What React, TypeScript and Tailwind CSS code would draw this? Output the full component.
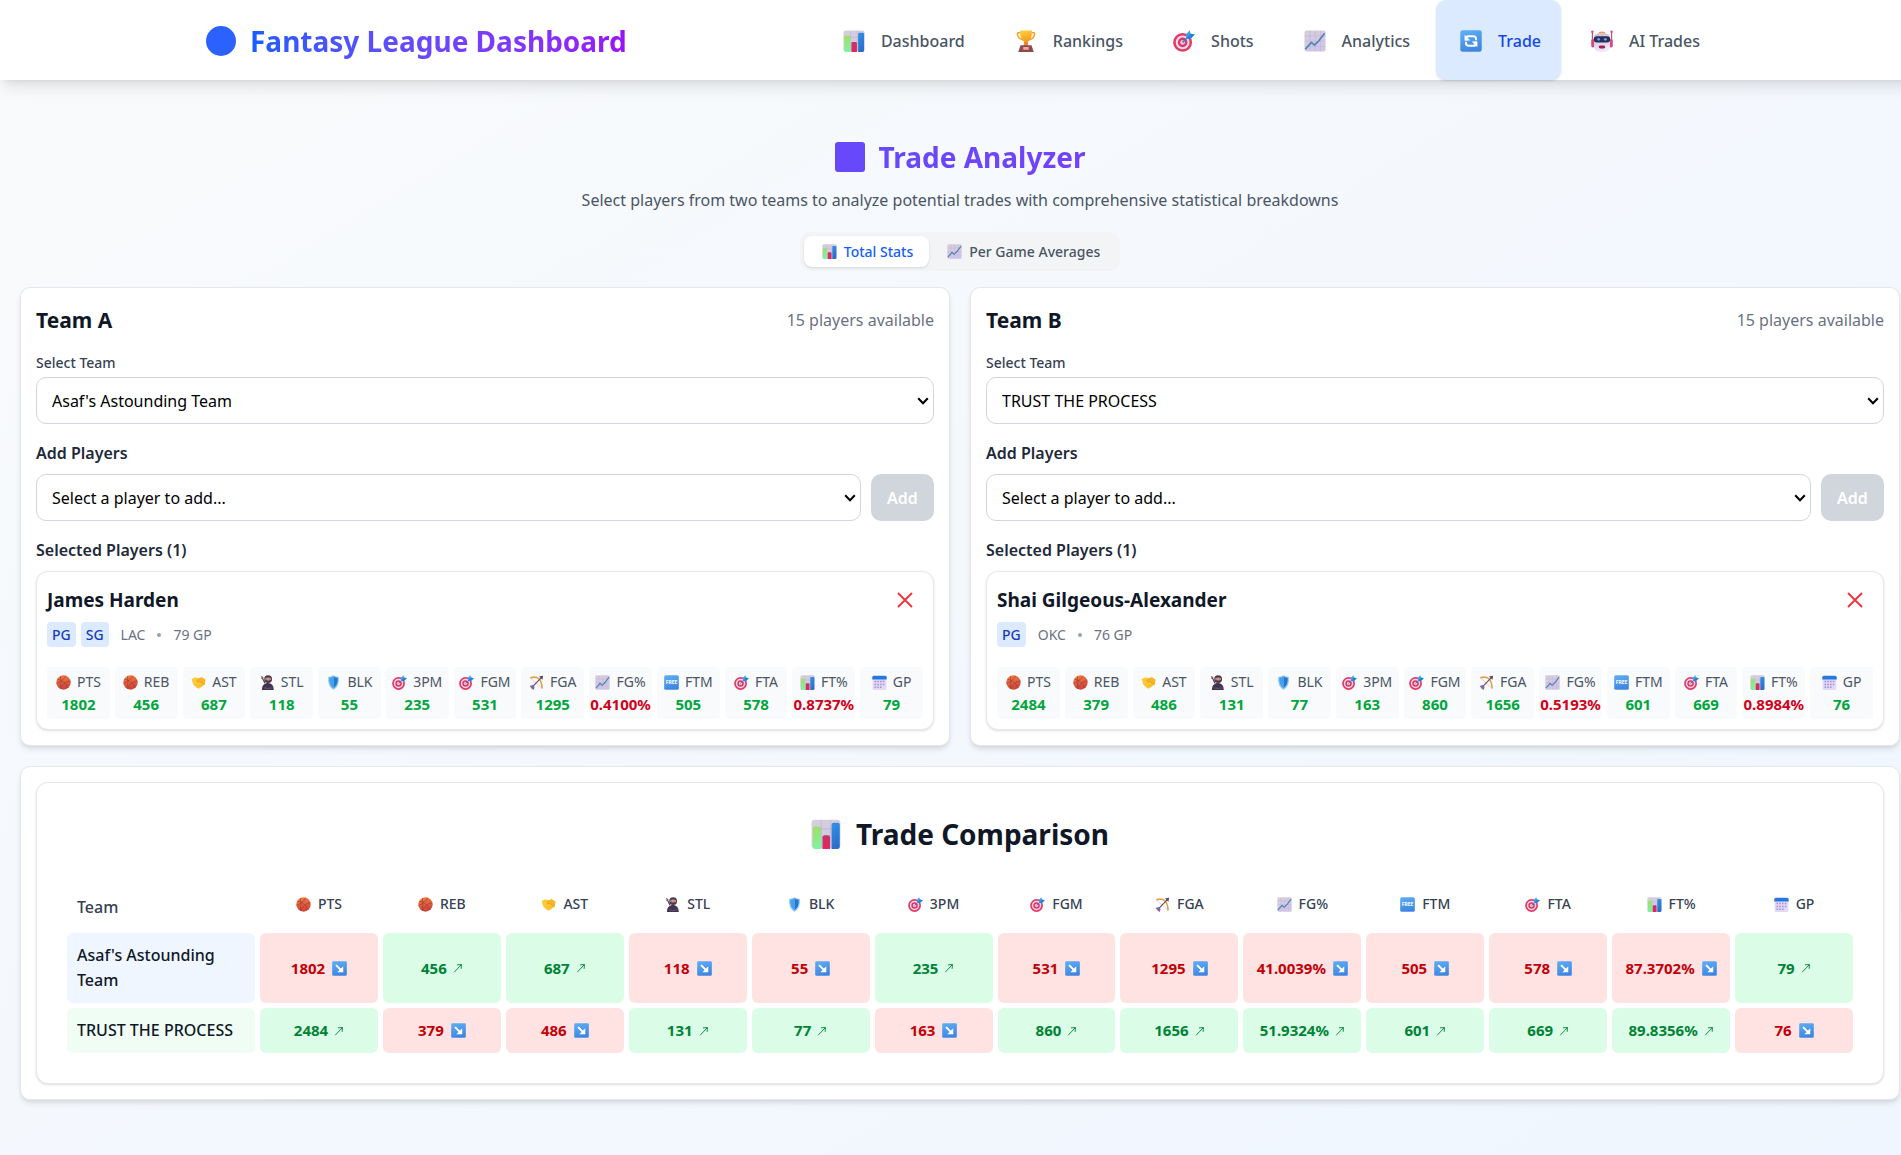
import React, { useState } from "react";

type IconName =
  | "bars" | "trophy" | "target" | "line" | "refresh" | "robot" | "ball"
  | "hands" | "ninja" | "shield" | "bow" | "free" | "calendar" | "down" | "up";

const shapes: Record<IconName, React.ReactNode> = {
  bars: (
    <>
      <rect x="0.5" y="0.5" width="23" height="23" rx="2.5" fill="url(#paper)" />
      <path d="M8.2 1v22M15.8 1v22M1 8h22" stroke="#b9afc4" strokeWidth="0.5" />
      <path d="M1.500 7.500Q1.500 6 3 6h3.500Q8 6 8 7.500V24H3q-1.500 0-1.500-2z" fill="url(#green)" />
      <path d="M9.200 14.500Q9.200 13 10.700 13h3Q15.200 13 15.200 14.500V24h-6z" fill="url(#pink)" />
      <path d="M16.500 4.500Q16.500 3 18 3h3.500Q23 3 23 4.500V22q0 2-2 2h-4.500z" fill="url(#blue)" />
    </>
  ),
  trophy: (
    <>
      <path d="M6 3H3.500q-1 0-.8 1.500Q3.500 10 8.500 10.500M18 3h2.500q1 0 .8 1.500Q20.500 10 15.500 10.500" fill="none" stroke="#f2a32b" strokeWidth="1.700" />
      <path d="M10.300 11h3.400l1 7H9.300z" fill="#e8862a" />
      <path d="M5.500 0.500h13Q19 12.500 12 13.500 5 12.500 5.500 0.500z" fill="url(#gold)" />
      <path d="M6 16.500h12l2.500 7.500h-17z" fill="#8d4b50" />
      <rect x="9" y="18.500" width="6" height="3" rx="0.600" fill="#f3a9a0" />
    </>
  ),
  target: (
    <>
      <circle cx="10.500" cy="13.500" r="10.300" fill="#e23c69" />
      <circle cx="10.500" cy="13.500" r="7.500" fill="#f6dbe8" />
      <circle cx="10.500" cy="13.500" r="5.200" fill="#d93669" />
      <circle cx="10.500" cy="13.500" r="2.700" fill="#f3c3d6" />
      <path d="M10.500 13.500L18 6" stroke="#4b79c9" strokeWidth="1.600" />
      <path d="M14.500 9.500l-.3-5L18.300.3l.7 3.500L23.700 5l-4.200 4.200z" fill="#38a3ea" />
      <path d="M14.500 9.500L19 4l4.700 1-4.200 4.200z" fill="#2781d6" />
    </>
  ),
  line: (
    <>
      <rect x="0.500" y="0.500" width="23" height="23" rx="2" fill="url(#paper)" />
      <path d="M6.500 1v22M12.200 1v22M18 1v22M1 6.500h22M1 12.200h22M1 18h22" stroke="#c3b1d3" strokeWidth="0.600" />
      <path d="M1.500 21L8 13.500l3.500 3L16 12l6.500-8.500" fill="none" stroke="#4d86b8" strokeWidth="1.900" />
    </>
  ),
  refresh: (
    <>
      <rect x="0.300" y="0.300" width="23.400" height="23.400" rx="2.500" fill="url(#tile)" />
      <path d="M7 11.500V8.700q0-2 2-2h5.500q3 0 3 3v1.600" fill="none" stroke="#fff" strokeWidth="2.200" />
      <path d="M17 12.500v2.800q0 2-2 2H9.500q-3 0-3-3v-1.600" fill="none" stroke="#fff" strokeWidth="2.200" />
      <path d="M5 5.200v6.300h6.300zM19 18.800v-6.300h-6.300z" fill="#fff" />
    </>
  ),
  robot: (
    <>
      <path d="M1.500 2v14M22.500 2v14" stroke="#cc3f68" strokeWidth="1.200" />
      <circle cx="1.500" cy="1.800" r="1.300" fill="#e0436e" />
      <circle cx="22.500" cy="1.800" r="1.300" fill="#e0436e" />
      <rect x="0.300" y="10" width="3.500" height="9" rx="1.500" fill="#d8467a" />
      <rect x="20.200" y="10" width="3.500" height="9" rx="1.500" fill="#d8467a" />
      <path d="M8 4q0-2.500 4-2.500T16 4z" fill="#f3a33f" />
      <path d="M3 8q0-4.500 9-4.500T21 8l-.5 10q-.5 6-8.500 6t-8.500-6z" fill="url(#metal)" />
      <rect x="3" y="6.700" width="18" height="7" rx="3.500" fill="#2c2e55" />
      <circle cx="8.300" cy="10.200" r="1.600" fill="#5aa8ea" />
      <circle cx="15.700" cy="10.200" r="1.600" fill="#5aa8ea" />
      <rect x="8.500" y="17" width="7" height="3.200" rx="1.600" fill="#a1224f" />
    </>
  ),
  ball: (
    <>
      <circle cx="12" cy="12" r="11.500" fill="url(#orange)" />
      <path d="M2 6.500Q13 8 19.500 21M7 1.700Q9 12 6.500 22M15.500 1.200Q12 9 0.800 13.500M23 9.500Q13 10 7 22.500" fill="none" stroke="#8c3a3f" strokeWidth="0.900" />
    </>
  ),
  hands: (
    <>
      <path d="M1 6.500L7 3.500l5 2 5-2 6 3.500-1 8-7 5.500-3.500 1.500L3.500 15z" fill="#fdc935" />
      <path d="M12 5.500l5-2 6 3.500-1 8-2 1.500-6.500-5.500-3 1.500L9 9.500z" fill="#f8b526" />
      <path d="M12 5.500l-3 4q2 2.500 5 .3l6.500 5M9 20l2-2M6 17.500l2.500-2.200M15 18.500l-3-3M17.500 17l-3-3" fill="none" stroke="#dd9218" strokeWidth="0.800" />
    </>
  ),
  ninja: (
    <>
      <path d="M2.500 2l5.500 11" stroke="#4b3a55" strokeWidth="1.800" />
      <path d="M1.500 5.800L5.500 4" stroke="#9a6b62" strokeWidth="1.300" />
      <path d="M3 24q-.5-9.500 9-11.500 10 1 10 11.500z" fill="#40334d" />
      <circle cx="13" cy="6.500" r="6.300" fill="#4a3a54" />
      <path d="M8.500 5q4.500-2 9 0v3q-4.500 1.500-9 0z" fill="#d79a76" />
      <circle cx="10.800" cy="6.500" r="0.700" fill="#2c2235" />
      <circle cx="15.200" cy="6.500" r="0.700" fill="#2c2235" />
      <path d="M6 20.500q7 2 14 0" fill="none" stroke="#756080" strokeWidth="1.200" />
    </>
  ),
  shield: (
    <>
      <path d="M12 0.500q4.500 2.500 8.500 2.500 1.500 15-8.500 20.500Q2 18 3.500 3q4 0 8.500-2.500z" fill="#8cc7f4" />
      <path d="M12 2.500q3.500 1.800 6.700 2Q19.500 16.500 12 21.200z" fill="#2476cf" />
      <path d="M12 2.500Q8.500 4.300 5.300 4.500 4.500 16.500 12 21.200z" fill="#45a0ea" />
    </>
  ),
  bow: (
    <>
      <path d="M2 4.500Q20 -1 21 21.500" fill="none" stroke="#e6a04b" strokeWidth="2.600" />
      <path d="M2 4.500L21 21.500" stroke="#b9a8bd" strokeWidth="0.800" />
      <path d="M5 19.500L19 5" stroke="#7a4d59" strokeWidth="1.900" />
      <path d="M22.500 1l-1 6.500-5.500-5z" fill="#4f4163" />
      <path d="M1 17.500l5-1.500 3 3-1.500 5-3-2z" fill="#8067a8" />
    </>
  ),
  free: (
    <>
      <rect x="0.300" y="0.300" width="23.400" height="23.400" rx="2.500" fill="url(#tile)" />
      <text x="12" y="15" textAnchor="middle" fontSize="8" fontWeight="700" fill="#fff">FREE</text>
    </>
  ),
  calendar: (
    <>
      <rect x="1" y="3" width="22" height="21" rx="2.500" fill="#e3d9f5" />
      <path d="M0.500 7V3.500Q0.500 1 3 1h18q2.500 0 2.500 2.500V7z" fill="#2478df" />
      <path d="M4 10.500h16M4 15h16M4 19.500h12" stroke="#a493dc" strokeWidth="2.400" strokeDasharray="2.600 1.800" />
    </>
  ),
  down: (
    <>
      <rect x="0.300" y="0.300" width="23.400" height="23.400" rx="2" fill="url(#tile)" />
      <path d="M6.500 6.500l8 8" stroke="#fff" strokeWidth="3" />
      <path d="M18 8.500V18H8.500z" fill="#fff" />
    </>
  ),
  up: <path d="M3 22L20 4M9.500 4.500L20.300 3.700 19.500 14" fill="none" stroke="currentColor" strokeWidth="2.200" />,
};

function Icon({ name, className }: { name: IconName; className: string }) {
  return (
    <svg viewBox="0 0 24 24" className={`shrink-0 ${className}`} aria-hidden="true">
      {shapes[name]}
    </svg>
  );
}

function Gradient({ id, from, to }: { id: string; from: string; to: string }) {
  return (
    <linearGradient id={id} x1="0" y1="0" x2="0.300" y2="1">
      <stop offset="0" stopColor={from} />
      <stop offset="1" stopColor={to} />
    </linearGradient>
  );
}

function Gradients() {
  return (
    <svg className="absolute size-0" aria-hidden="true">
      <defs>
        <Gradient id="paper" from="#d6cfdb" to="#d2c6e8" />
        <Gradient id="green" from="#a5dc62" to="#7cf59a" />
        <Gradient id="pink" from="#b93a63" to="#e3265f" />
        <Gradient id="blue" from="#3191ea" to="#2b6fc8" />
        <Gradient id="gold" from="#ffd23f" to="#f29a1f" />
        <Gradient id="tile" from="#5fb0f7" to="#3f86e0" />
        <Gradient id="metal" from="#c9b8dc" to="#efe9f7" />
        <Gradient id="orange" from="#f8803f" to="#cf4538" />
      </defs>
    </svg>
  );
}

const navItems: { label: string; icon: IconName; active?: boolean }[] = [
  { label: "Dashboard", icon: "bars" },
  { label: "Rankings", icon: "trophy" },
  { label: "Shots", icon: "target" },
  { label: "Analytics", icon: "line" },
  { label: "Trade", icon: "refresh", active: true },
  { label: "AI Trades", icon: "robot" },
];

const stats: { label: string; icon: IconName }[] = [
  { label: "PTS", icon: "ball" },
  { label: "REB", icon: "ball" },
  { label: "AST", icon: "hands" },
  { label: "STL", icon: "ninja" },
  { label: "BLK", icon: "shield" },
  { label: "3PM", icon: "target" },
  { label: "FGM", icon: "target" },
  { label: "FGA", icon: "bow" },
  { label: "FG%", icon: "line" },
  { label: "FTM", icon: "free" },
  { label: "FTA", icon: "target" },
  { label: "FT%", icon: "bars" },
  { label: "GP", icon: "calendar" },
];

interface Team {
  id: string;
  title: string;
  name: string;
  player: string;
  positions: string[];
  club: string;
  games: string;
  values: string[];
}

const teams: Team[] = [
  {
    id: "a", title: "Team A", name: "Asaf's Astounding Team", player: "James Harden",
    positions: ["PG", "SG"], club: "LAC", games: "79 GP",
    values: ["1802", "456", "687", "118", "55", "235", "531", "1295", "0.4100%", "505", "578", "0.8737%", "79"],
  },
  {
    id: "b", title: "Team B", name: "TRUST THE PROCESS", player: "Shai Gilgeous-Alexander",
    positions: ["PG"], club: "OKC", games: "76 GP",
    values: ["2484", "379", "486", "131", "77", "163", "860", "1656", "0.5193%", "601", "669", "0.8984%", "76"],
  },
];

const comparison = [
  {
    name: "Asaf's Astounding Team", tint: "bg-blue-50",
    values: ["1802", "456", "687", "118", "55", "235", "531", "1295", "41.0039%", "505", "578", "87.3702%", "79"],
    wins: [1, 2, 5, 12],
  },
  {
    name: "TRUST THE PROCESS", tint: "bg-green-50",
    values: ["2484", "379", "486", "131", "77", "163", "860", "1656", "51.9324%", "601", "669", "89.8356%", "76"],
    wins: [0, 3, 4, 6, 7, 8, 9, 10, 11],
  },
];

function Select({ children, ...props }: React.ComponentProps<"select">) {
  return (
    <div className="relative w-full">
      <select {...props} className="block h-[47px] w-full appearance-none rounded-[10px] border border-gray-300 bg-white px-[15px] pt-px text-base text-black">
        {children}
      </select>
      <svg viewBox="0 0 12 8" className="pointer-events-none absolute top-5 right-[5px] h-2 w-3" aria-hidden="true">
        <path d="M1.200 1.200L6 6.200l4.800-5" fill="none" stroke="#000" strokeWidth="2" />
      </svg>
    </div>
  );
}

function PlayerCard({ team }: { team: Team }) {
  return (
    <article className="rounded-xl border border-gray-200 bg-white p-[10px] shadow-sm">
      <div className="flex h-9 items-center justify-between">
        <h4 className="text-[19px] leading-7 font-bold text-gray-900">{team.player}</h4>
        <button type="button" aria-label={`Remove ${team.player}`} className="flex size-9 items-center justify-center text-[#f0303c]">
          <svg viewBox="0 0 16 16" className="size-4" aria-hidden="true">
            <path d="M1.500 1.500l13 13M14.500 1.500l-13 13" stroke="currentColor" strokeWidth="1.800" strokeLinecap="round" />
          </svg>
        </button>
      </div>
      <div className="mt-1 flex items-center text-[14px] text-gray-500">
        <div className="mr-3 flex gap-[5px]">
          {team.positions.map((p) => (
            <span key={p} className="rounded bg-blue-100 px-[5px] leading-[25px] font-medium text-blue-800">{p}</span>
          ))}
        </div>
        <span>{team.club}</span>
        <span className="mx-3 size-1 rounded-full bg-gray-400" />
        <span>{team.games}</span>
      </div>
      <dl className="mt-5 grid grid-cols-13 gap-[5px]">
        {stats.map((s, i) => (
          <div key={s.label} className="rounded bg-gray-50 py-1 text-center leading-[22px]">
            <dt className="flex items-center justify-center gap-[6px] text-[14px] text-gray-600">
              <Icon name={s.icon} className="size-[15px]" />
              {s.label}
            </dt>
            <dd className={`flex justify-center text-[15px] font-bold ${team.values[i].includes("%") ? "text-[#d0021b]" : "text-[#00a63e]"}`}>
              {team.values[i]}
            </dd>
          </div>
        ))}
      </dl>
    </article>
  );
}

function TeamPanel({ team }: { team: Team }) {
  return (
    <section className="min-w-0 rounded-[10px] border border-gray-200 bg-white p-[15px] shadow-md">
      <div className="mb-4 flex items-center justify-between leading-[34px]">
        <h2 className="text-[21px] font-bold text-gray-900">{team.title}</h2>
        <span className="text-base leading-[34px] text-gray-500">15 players available</span>
      </div>
      <label htmlFor={`team-${team.id}`} className="mb-1 block text-[14px] leading-5 font-medium text-gray-700">Select Team</label>
      <Select id={`team-${team.id}`} defaultValue={team.name}>
        <option>Asaf's Astounding Team</option>
        <option>TRUST THE PROCESS</option>
      </Select>
      <h3 id={`add-${team.id}`} className="mt-4 mb-2 text-base leading-[26px] font-semibold text-gray-800">Add Players</h3>
      <div className="flex gap-[10px]">
        <Select aria-labelledby={`add-${team.id}`} defaultValue="">
          <option value="">Select a player to add...</option>
        </Select>
        <button type="button" disabled className="w-[63px] shrink-0 rounded-[10px] bg-gray-300 text-base font-semibold text-white">Add</button>
      </div>
      <h3 className="mt-4 mb-2 text-base leading-[26px] font-semibold text-gray-800">Selected Players (1)</h3>
      <PlayerCard team={team} />
    </section>
  );
}

function Comparison() {
  return (
    <section className="rounded-[10px] border border-gray-200 bg-white p-[15px] shadow-md">
      <div className="rounded-xl border border-gray-200 bg-white px-[25px] pt-[33px] pb-[25px] shadow-sm">
        <h2 className="mb-[29px] flex items-center justify-center gap-[15px] text-[28px] leading-9 font-bold text-gray-900">
          <Icon name="bars" className="size-[30px]" />
          Trade Comparison
        </h2>
        <table className="w-full table-fixed border-separate border-spacing-[5px]">
          <thead>
            <tr>
              <th scope="col" className="w-[188px] p-2 px-[10px] text-left align-top text-base leading-[26px] font-medium text-gray-700">Team</th>
              {stats.map((s) => (
                <th key={s.label} scope="col" className="p-2 align-top text-[14px] leading-5 font-medium text-gray-700">
                  <span className="flex items-center justify-center gap-[7px]">
                    <Icon name={s.icon} className="size-[15px]" />
                    {s.label}
                  </span>
                </th>
              ))}
            </tr>
          </thead>
          <tbody>
            {comparison.map((row) => (
              <tr key={row.name}>
                <th scope="row" className={`rounded-md p-[10px] text-left text-base leading-[25px] font-medium text-gray-900 ${row.tint}`}>{row.name}</th>
                {row.values.map((value, i) => {
                  const win = row.wins.includes(i);
                  return (
                    <td key={i} className={`rounded-md text-[15px] leading-[25px] font-bold ${win ? "bg-green-100 text-green-700" : "bg-[#ffe2e2] text-[#c10007]"}`}>
                      <span className={`flex items-center justify-center ${win ? "gap-[6px]" : "gap-[7px]"}`}>
                        {value}
                        <Icon name={win ? "up" : "down"} className={win ? "size-[10px]" : "size-[15px]"} />
                      </span>
                    </td>
                  );
                })}
              </tr>
            ))}
          </tbody>
        </table>
      </div>
    </section>
  );
}

export default function App() {
  const [perGame, setPerGame] = useState(false);
  const on = "bg-white text-blue-600 shadow-sm";
  const off = "text-gray-600";
  return (
    <div className="min-h-screen overflow-x-hidden bg-linear-to-br from-gray-50 to-blue-50 font-['Noto_Sans','Open_Sans',sans-serif]">
      <Gradients />
      <div className="-mr-[19px]">
        <header className="bg-white shadow-lg">
          <div className="mx-auto flex h-20 max-w-[1536px] items-center justify-between pr-2 pl-[14px]">
            <div className="flex items-center gap-[14px] pt-0.5">
              <span className="size-[30px] rounded-full bg-[#2b62fd]" />
              <span className="bg-linear-to-r from-blue-600 to-purple-600 bg-clip-text text-[28px] leading-10 font-bold text-transparent">Fantasy League Dashboard</span>
            </div>
            <nav className="flex h-full gap-1.5">
              {navItems.map((item) => (
                <a
                  key={item.label}
                  href="#"
                  aria-current={item.active ? "page" : undefined}
                  className={`flex items-center gap-4 rounded-[10px] pt-0.5 pr-5 pl-6 text-base font-medium ${item.active ? "bg-blue-100 text-blue-700 shadow-sm" : "text-gray-600"}`}
                >
                  <Icon name={item.icon} className="size-[22px]" />
                  {item.label}
                </a>
              ))}
            </nav>
          </div>
        </header>
        <main className="px-5 pt-14 pb-14">
          <div className="flex flex-col items-center">
            <h1 className="flex w-full items-center justify-center gap-[14px] bg-linear-to-r from-blue-600 to-purple-600 bg-clip-text text-[28px] leading-[42px] font-bold text-transparent">
              <span className="size-[30px] rounded-[3px] bg-[#6749fb]" />
              Trade Analyzer
            </h1>
            <p className="mt-[10px] text-base leading-6 text-gray-600">
              Select players from two teams to analyze potential trades with comprehensive statistical breakdowns
            </p>
            <div className="mt-5 mb-4 flex rounded-[10px] bg-gray-100 p-1 text-[14px] leading-[19px] font-medium">
              <button type="button" onClick={() => setPerGame(false)} className={`flex items-center gap-[7px] rounded-lg py-1.5 pr-4 pl-[18px] ${perGame ? off : on}`}>
                <Icon name="bars" className="size-[15px]" />
                Total Stats
              </button>
              <button type="button" onClick={() => setPerGame(true)} className={`flex items-center gap-[7px] rounded-lg py-1.5 pr-4 pl-[18px] ${perGame ? on : off}`}>
                <Icon name="line" className="size-[15px]" />
                Per Game Averages
              </button>
            </div>
          </div>
          <div className="grid grid-cols-2 gap-5">
            {teams.map((team) => (
              <TeamPanel key={team.id} team={team} />
            ))}
            <div className="col-span-2">
              <Comparison />
            </div>
          </div>
        </main>
      </div>
    </div>
  );
}
